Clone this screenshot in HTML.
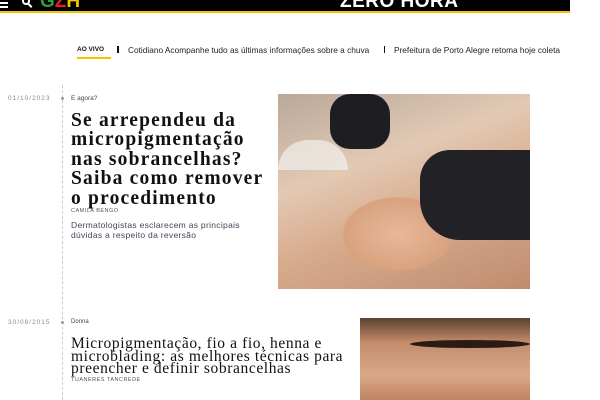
<!DOCTYPE html>
<html><head><meta charset="utf-8"><style>
*{margin:0;padding:0;box-sizing:border-box}
body{width:600px;height:400px;overflow:hidden;background:#fff;position:relative;font-family:"Liberation Sans",sans-serif}
.a{position:absolute;white-space:nowrap}
.bar{left:0;top:0;width:570px;height:13px;background:#000;border-bottom:2px solid #f5c400}
.h1{font-family:"Liberation Serif",serif;font-weight:bold;font-size:19.5px;letter-spacing:1.2px;line-height:19.4px;color:#111}
.h2{font-family:"Liberation Serif",serif;font-size:15.5px;letter-spacing:0.6px;line-height:12.5px;color:#111;white-space:normal}
.d{font-size:6.5px;color:#888;letter-spacing:1px}
</style></head><body>
<div class="a bar"></div>
<div class="a" style="left:0;top:2px;width:8px;height:2px;background:#fff"></div>
<div class="a" style="left:0;top:6px;width:8px;height:2px;background:#fff"></div>
<div class="a" style="left:22px;top:-3px;width:8px;height:8px;border:2px solid #fff;border-radius:50%"></div>
<div class="a" style="left:29px;top:3px;width:2px;height:5px;background:#fff;transform:rotate(-45deg)"></div>
<div class="a" style="left:40px;top:-8px;font-weight:bold;font-size:19px;line-height:20px"><span style="color:#2e9d3a">G</span><span style="color:#e2231a">Z</span><span style="color:#f5c400">H</span></div>
<div class="a" style="left:340px;top:-9px;font-weight:900;font-size:19px;color:#fff;letter-spacing:0.5px">ZERO HORA</div>

<div class="a" style="left:77px;top:46px;font-size:6.5px;font-weight:bold;color:#111">AO VIVO</div>
<div class="a" style="left:77px;top:57px;width:34px;height:2px;background:#f5c400"></div>
<div class="a" style="left:117px;top:46px;width:2px;height:7px;background:#111"></div>
<div class="a" style="left:128px;top:45px;font-size:8.3px;color:#222">Cotidiano Acompanhe tudo as últimas informações sobre a chuva</div>
<div class="a" style="left:384px;top:46px;width:1px;height:7px;background:#111"></div>
<div class="a" style="left:394px;top:45px;font-size:8.3px;color:#222">Prefeitura de Porto Alegre retoma hoje coleta</div>

<div class="a" style="left:62px;top:85px;height:315px;border-left:1px dashed #ccc"></div>

<div class="a d" style="left:8px;top:95px">01/10/2023</div>
<div class="a" style="left:61px;top:97px;width:3px;height:3px;background:#999;border-radius:50%"></div>
<div class="a" style="left:71px;top:95px;font-size:6.5px;color:#444">E agora?</div>
<div class="a h1" style="left:71px;top:111px">Se arrependeu da<br>micropigmentação<br>nas sobrancelhas?<br>Saiba como remover<br>o procedimento</div>
<div class="a" style="left:71px;top:208px;font-size:5.5px;color:#555;letter-spacing:0.5px">CAMILA BENGO</div>
<div class="a" style="left:71px;top:220px;font-size:8.5px;line-height:10px;color:#445;white-space:normal;width:200px;letter-spacing:0.3px">Dermatologistas esclarecem as principais dúvidas a respeito da reversão</div>

<div class="a" style="left:278px;top:94px;width:252px;height:195px;background:radial-gradient(ellipse 90px 60px at 120px 140px,#e8b89a,#d9a27f 60%,transparent 62%),linear-gradient(160deg,#b9a89a 0%,#e2c9b4 35%,#d8ab8d 60%,#c08c6e 100%)"></div>
<div class="a" style="left:330px;top:94px;width:60px;height:55px;background:#1e1e22;border-radius:20px"></div>
<div class="a" style="left:420px;top:150px;width:110px;height:90px;background:#222226;border-radius:30px 0 0 40px"></div>
<div class="a" style="left:278px;top:140px;width:70px;height:30px;background:#eeeae6;border-radius:30px 30px 0 0;opacity:.8"></div>

<div class="a d" style="left:8px;top:319px">30/08/2015</div>
<div class="a" style="left:61px;top:321px;width:3px;height:3px;background:#999;border-radius:50%"></div>
<div class="a" style="left:71px;top:319px;font-size:6px;color:#444">Donna</div>
<div class="a h2" style="left:71px;top:338px;width:285px">Micropigmentação, fio a fio, henna e microblading: as melhores técnicas para preencher e definir sobrancelhas</div>
<div class="a" style="left:71px;top:377px;font-size:5.5px;color:#555;letter-spacing:0.5px">TUANERES TANCREDE</div>

<div class="a" style="left:360px;top:318px;width:170px;height:82px;background:linear-gradient(180deg,#5b4030 0%,#c48d6c 30%,#d9a888 70%,#c08463 100%)"></div>
<div class="a" style="left:410px;top:340px;width:120px;height:8px;background:#2a1c15;border-radius:50%"></div>
</body></html>
